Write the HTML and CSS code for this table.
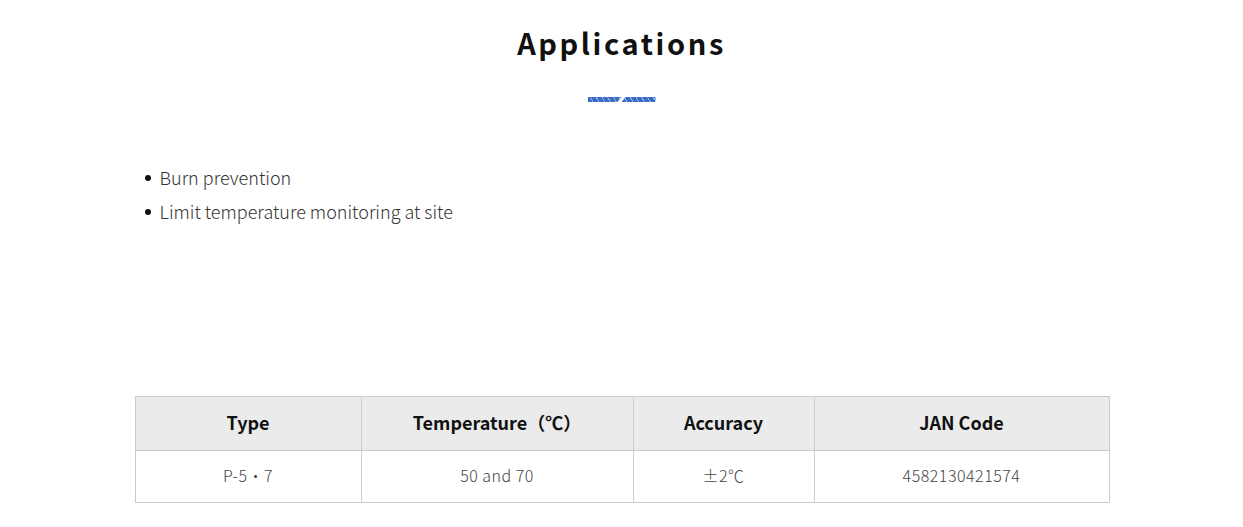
FILE: index.html
```html
<!DOCTYPE html>
<html lang="en">
<head>
<meta charset="utf-8">
<title>Applications</title>
<link rel="stylesheet" href="styles.css">
</head>
<body>
<section class="section">
  <h2 class="title">Applications</h2>
  <div class="divider"><span class="bar bar-left"></span><span class="bar bar-right"></span></div>
  <ul class="apps">
    <li>Burn prevention</li>
    <li>Limit temperature monitoring at site</li>
  </ul>
  <table class="spec">
    <colgroup>
      <col class="c1"><col class="c2"><col class="c3"><col class="c4">
    </colgroup>
    <thead>
      <tr><th>Type</th><th>Temperature（℃）</th><th>Accuracy</th><th>JAN Code</th></tr>
    </thead>
    <tbody>
      <tr><td>P-5・7</td><td>50 and 70</td><td>±2℃</td><td>4582130421574</td></tr>
    </tbody>
  </table>
</section>
</body>
</html>
```

FILE: styles.css
```css
html, body {
  margin: 0;
  padding: 0;
  background: #fff;
}
body {
  font-family: "Noto Sans CJK JP", "Noto Sans", sans-serif;
  color: #222;
}
.section {
  width: 974px;
  margin: 0 auto;
  padding-top: 20px;
}
.title {
  margin: 0;
  text-align: center;
  font-size: 29px;
  line-height: 44px;
  font-weight: 700;
  letter-spacing: 2.6px;
  color: #111;
}
.divider {
  display: flex;
  justify-content: center;
  margin-top: 33px;
  height: 5px;
}
.bar {
  display: block;
  width: 34px;
  height: 5px;
  background: repeating-linear-gradient(60deg, #3b6cc4 0 4px, #8fb0e6 4px 5px);
}
.bar-left {
  clip-path: polygon(0 0, 100% 0, 88% 100%, 0 100%);
}
.bar-right {
  clip-path: polygon(12% 0, 100% 0, 100% 100%, 0 100%);
}
.apps {
  margin: 58px 0 0;
  padding: 0 0 0 25px;
  list-style: none;
  font-size: 18px;
  line-height: 34px;
  font-weight: 300;
  color: #333;
}
.apps li {
  position: relative;
}
.apps li::before {
  content: "";
  position: absolute;
  left: -15px;
  top: 15px;
  width: 6px;
  height: 6px;
  border-radius: 50%;
  background: #111;
}
.spec {
  margin-top: 168px;
  width: 974px;
  border-collapse: collapse;
  table-layout: fixed;
}
.c1 { width: 226px; }
.c2 { width: 272px; }
.c3 { width: 181px; }
.c4 { width: 295px; }
.spec th, .spec td {
  border: 1px solid #ccc;
  text-align: center;
  padding: 0 0 4px;
}
.spec th {
  background: #ebebeb;
  height: 49px;
  font-size: 18px;
  font-weight: 700;
  color: #111;
}
.spec td {
  height: 47px;
  font-size: 16px;
  font-weight: 300;
  color: #444;
  letter-spacing: 0.5px;
}
```
